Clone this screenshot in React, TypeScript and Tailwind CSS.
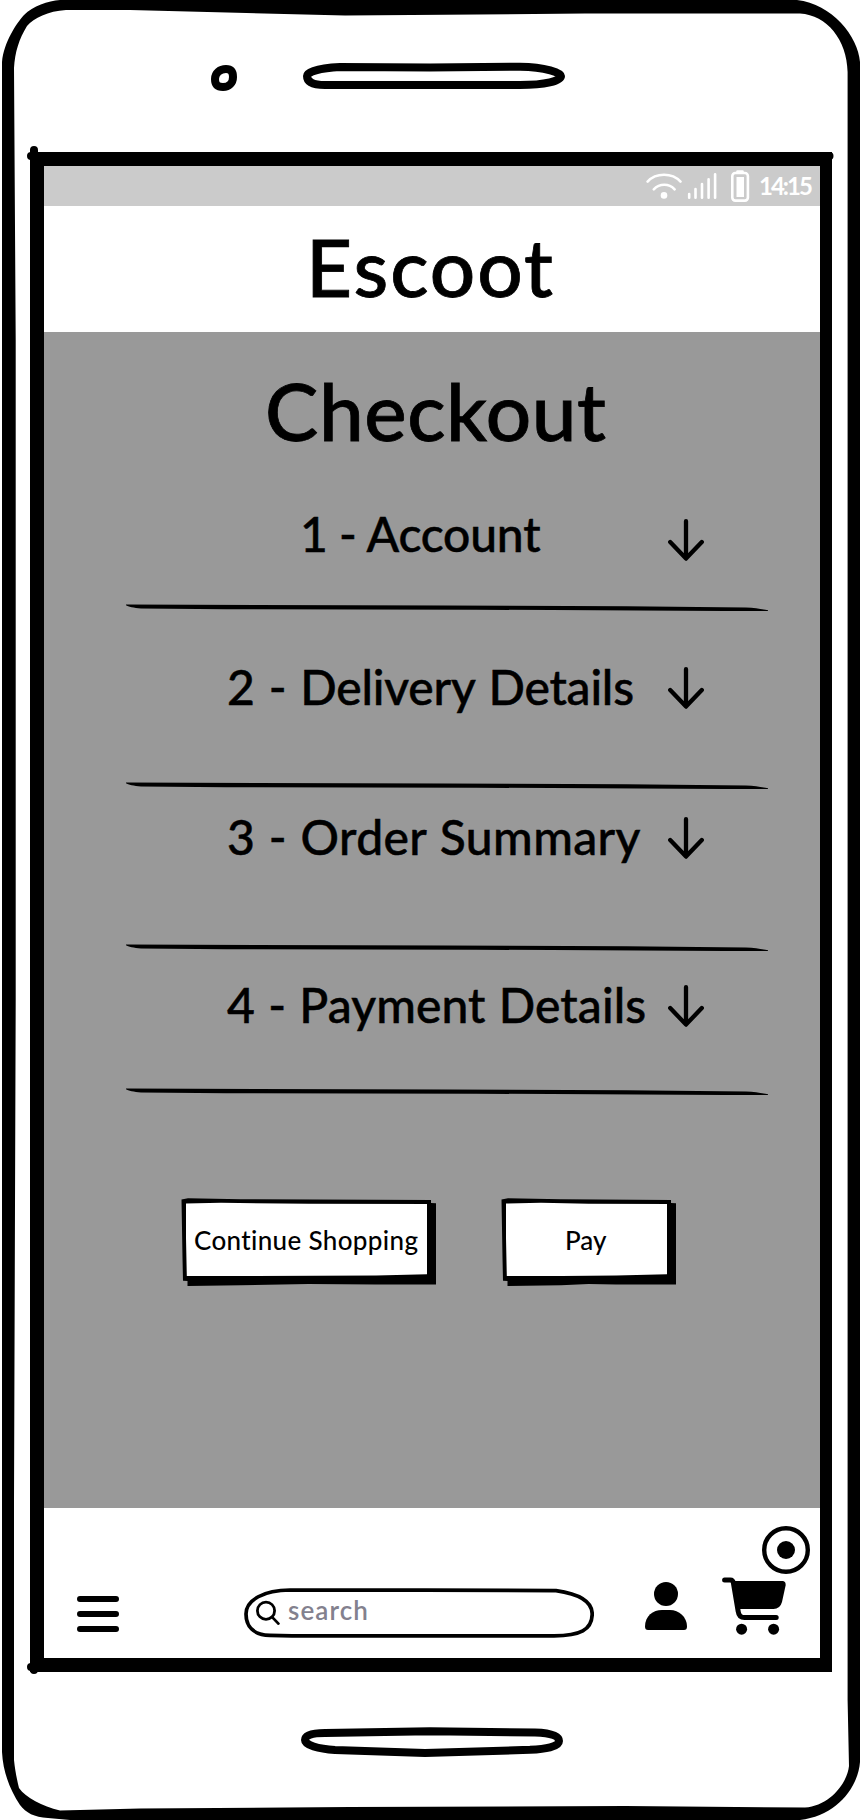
import type { ReactNode } from "react";

function PhoneFrame() {
  return (
    <svg className="pointer-events-none absolute inset-0" width="860" height="1820" viewBox="0 0 860 1820" fill="none">
      <path
        fill="#000"
        fillRule="evenodd"
        d="M2 62C4 42 16 24 24 15C33 6 48 1 60 0H797C832 4 858 36 860 62V1762C858 1788 836 1816 800 1820H70L48 1818C34 1817 26 1813 20 1805C10 1790 3 1772 2 1752ZM14 68L15.7 340V1000L14 1500V1760C15 1770 17 1780 19 1788C26 1798 42 1806 60 1810.5L140 1808.5L350 1807L625 1806L805 1807.5C829 1806 847 1784 849 1766L847.6 1700V72C847 40 827 15 800 13.5H585L345 15.5L130 10H66C48 11 34 18 27 26C19 39 15 52 14 68Z"
      />
      <path
        stroke="#000"
        strokeWidth="8"
        d="M226 69C231 69 233 72 233 77C233 83 229 87 223 87C217 87 215 84 215 79C215 73 220 69 226 69Z"
      />
      <path
        stroke="#000"
        strokeWidth="8"
        d="M340 67L430 67.5L520 66.7C546 67 561 73 561 76C561 81 545 85 520 85H325C312 85 307 81 307 76C307 72 320 68 340 67Z"
      />
      <path
        stroke="#000"
        strokeWidth="8"
        d="M325 1733L430 1731.2L535 1732.5C552 1733 559 1736 559 1741C559 1747 545 1749 530 1749.8L425 1753L335 1750C318 1749 305 1745 305 1740C305 1735 312 1733 325 1733Z"
      />
      <path stroke="#000" strokeWidth="8" strokeLinecap="round" d="M34 150V160M31 156H40M31 1667H40M34 1662V1670M820 156H829.5" />
    </svg>
  );
}

function StatusIcons() {
  return (
    <svg width="104" height="40" viewBox="646 166 104 40" fill="none" stroke="#fff" strokeWidth="2.6" strokeLinecap="round">
      <path d="M647.6 181.6C656 172.5 672 172.5 680.5 181.6M653.8 189.3C659.5 183.2 669 183.2 674.6 189.3" />
      <circle cx="664" cy="195.4" r="3.3" fill="#fff" stroke="none" />
      <path d="M689.2 194V197.8M695.5 189V197.8M702 184V197.8M708.6 179.3V197.8M715.1 174.3V197.8" />
      <rect x="732.3" y="173" width="15.6" height="27.6" rx="3" />
      <path d="M737.5 171.5H742.5" />
      <rect x="736.5" y="177" width="7.5" height="20" fill="#fff" stroke="none" />
    </svg>
  );
}

function DownArrow() {
  return (
    <svg width="36" height="42" viewBox="0 0 36 42" fill="none" stroke="#000" strokeWidth="4.3" strokeLinecap="round" strokeLinejoin="round">
      <path d="M18 2.2V39.6M2.2 23L18 39.6L33.8 23" />
    </svg>
  );
}

function Divider({ className }: { className: string }) {
  return (
    <svg className={`ml-[82px] block ${className}`} width="642" height="8" viewBox="0 0 642 8">
      <path d="M0 .6L320 1.4L500 2.2L620 3.5C630 4 638 5.5 642 6.3V7H600L350 5.7L100 5.2L15 4.4C8 3.8 2 2.6 0 1.2Z" />
    </svg>
  );
}

function SketchButton({ width, className, children }: { width: number; className: string; children: ReactNode }) {
  const w = width;
  return (
    <button className={`relative h-[88px] ${className}`}>
      <svg className="absolute inset-0" width={w} height="88" viewBox={`0 0 ${w} 88`}>
        <path
          d={`M.5 1.5L7 .3L60 1.2L${w - 5} 2V5L${w} 5.3V86.5H${w - 60}L${w / 2} 86L60 87.3L6.5 88V83L2 82.7L1.5 60Z`}
        />
        <path fill="#fff" d={`M5 5.6L40 4.8L${w / 2} 5.7L${w - 9} 6V76.3L${w - 60} 77.5L60 78L5.8 78L5 40Z`} />
      </svg>
      <span className="relative block h-[88px] pt-[29px] text-left text-[26px] leading-none whitespace-nowrap">{children}</span>
    </button>
  );
}

const steps = [
  {
    label: "1 - Account",
    row: "pt-[59px]",
    text: "pl-[256px] w-[624px] tracking-[-0.2px] [word-spacing:-0.5px]",
    arrow: "pt-[11px]",
    divider: "mt-[36px]",
  },
  {
    label: "2 - Delivery Details",
    row: "pt-[49px]",
    text: "pl-[183px] w-[624px] tracking-[-0.2px] [word-spacing:2.1px]",
    arrow: "pt-[6px]",
    divider: "mt-[61px]",
  },
  {
    label: "3 - Order Summary",
    row: "pt-[21px]",
    text: "pl-[183px] w-[624px] tracking-[0.4px] [word-spacing:1px]",
    arrow: "pt-[6px]",
    divider: "mt-[73px]",
  },
  {
    label: "4 - Payment Details",
    row: "pt-[27px]",
    text: "pl-[183px] w-[624px] tracking-[0.1px] [word-spacing:1px]",
    arrow: "pt-[6px]",
    divider: "mt-[49px]",
  },
];

export default function App() {
  return (
    <div className="relative h-[1820px] w-[860px] overflow-hidden bg-white pt-[152px] pl-[30px] font-['Lato','Noto_Sans',sans-serif] font-medium text-black">
      <PhoneFrame />
      <div className="flex h-[1520px] w-[802px] flex-col border-t-[14px] border-r-[12px] border-b-[14px] border-l-[14px] border-black bg-white">
        <div className="flex h-[40px] shrink-0 bg-[#cbcbcb] pl-[602px] text-white">
          <StatusIcons />
          <span className="pt-[8px] pl-[9px] text-[24px] leading-none font-bold tracking-[-2px]">14:15</span>
        </div>

        <header className="h-[126px] shrink-0 pt-[20px] pl-[262px]">
          <h1 className="text-[80px] leading-none tracking-[2px] [-webkit-text-stroke:0.8px_#000]">Escoot</h1>
        </header>

        <main className="h-[1176px] shrink-0 bg-[#999] pt-[37px]">
          <h2 className="relative top-px pl-[221px] text-[80px] leading-none tracking-[0.6px] [-webkit-text-stroke:0.8px_#000]">Checkout</h2>
          {steps.map((s) => (
            <section key={s.label} className={s.row}>
              <div className="flex h-[60px] items-start">
                <div className={`pt-[2px] text-[48px] leading-none whitespace-nowrap [-webkit-text-stroke:0.5px_#000] ${s.text}`}>{s.label}</div>
                <div className={s.arrow}>
                  <DownArrow />
                </div>
              </div>
              <Divider className={s.divider} />
            </section>
          ))}
          <div className="mt-[102px] flex gap-[65px] pl-[137px]">
            <SketchButton width={255} className="w-[255px] pl-[13px] tracking-[0.35px]">
              Continue Shopping
            </SketchButton>
            <SketchButton width={175} className="w-[175px] pl-[64px]">
              Pay
            </SketchButton>
          </div>
        </main>

        <nav className="relative flex h-[150px] shrink-0 items-start pl-[33px]">
          <svg className="mt-[88px]" width="42" height="36" viewBox="0 0 42 36" stroke="#000" strokeWidth="6" strokeLinecap="round">
            <path d="M3 3H39M3 18H39M3 33H39" />
          </svg>

          <div className="relative mt-[80px] ml-[125px] flex h-[50px] w-[350px] items-start">
            <svg className="absolute inset-0" width="350" height="50" viewBox="0 0 350 50" fill="none" stroke="#000" strokeWidth="3.7">
              <path d="M46 2L180 2.2L312 2.6C336 6 348.2 14 348.2 26C348 42 336 47.6 310 47.8H48L26 47.4C9 47 2 38 2 26C2 12 20 2 46 2Z" />
            </svg>
            <svg className="relative mt-[12px] ml-[12px]" width="24" height="26" viewBox="0 0 24 26" fill="none" stroke="#000" strokeWidth="2.8" strokeLinecap="round">
              <circle cx="10" cy="10.7" r="8.6" />
              <path d="M16.4 17.4L22.4 23.6" />
            </svg>
            <span className="relative mt-[9px] ml-[8px] text-[26px] leading-none font-semibold tracking-[1.1px] text-[#83818e]">
              search
            </span>
          </div>

          <svg className="mt-[74px] ml-[51px]" width="42" height="48" viewBox="0 0 42 48">
            <circle cx="21" cy="12" r="12" />
            <path d="M0 44.5C0 34 8 28 17 28H25C34 28 42 35 42 44.5Q42 48 39 48H3Q0 48 0 44.5Z" />
          </svg>

          <svg className="mt-[69px] ml-[35px]" width="64" height="58" viewBox="0 0 64 58" fill="none">
            <path
              stroke="#000"
              strokeWidth="5"
              strokeLinecap="round"
              strokeLinejoin="round"
              d="M2.6 3H8.3Q11 3 11.5 6.5L16.2 34.5Q17 40.6 22.5 40.6H54.2"
            />
            <path fill="#000" d="M12 4H60.5Q64 4 63.6 8.5L60 25Q58 32 51.5 32H17Z" />
            <circle cx="19.6" cy="52.2" r="5.5" fill="#000" />
            <circle cx="51.6" cy="52.2" r="5.5" fill="#000" />
          </svg>

          <svg className="absolute top-[18px] left-[718px]" width="48" height="48" viewBox="0 0 48 48" fill="none">
            <circle cx="24" cy="24" r="21.8" stroke="#000" strokeWidth="4.4" />
            <circle cx="24" cy="24" r="9" fill="#000" />
          </svg>
        </nav>
      </div>
    </div>
  );
}
